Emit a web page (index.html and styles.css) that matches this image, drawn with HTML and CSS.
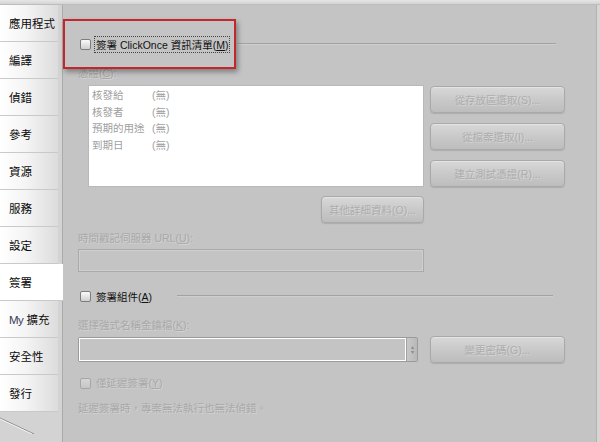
FILE: index.html
```html
<!DOCTYPE html>
<html lang="zh-Hant">
<head>
    <meta charset="UTF-8">
    <meta name="viewport" content="width=device-width, initial-scale=1.0">
    <title>簽署</title>
    <link rel="stylesheet" href="styles.css">
</head>
<body>
    <div class="topbar"></div>
    <div class="window">
        <nav class="tabs">
            <div class="tab">應用程式</div>
            <div class="tab">編譯</div>
            <div class="tab">偵錯</div>
            <div class="tab">參考</div>
            <div class="tab">資源</div>
            <div class="tab">服務</div>
            <div class="tab">設定</div>
            <div class="tab active">簽署</div>
            <div class="tab"><span><span class="my">My</span> 擴充</span></div>
            <div class="tab">安全性</div>
            <div class="tab">發行</div>
            <svg class="tab-tail" width="62" height="22" viewBox="0 0 62 22">
                <path d="M0 6 L34 22" stroke="#8a8a8a" stroke-width="1" fill="none"/>
                <path d="M0 7 L32 22" stroke="#f2f2f2" stroke-width="1" fill="none"/>
            </svg>
        </nav>

        <main class="panel">
            <!-- 簽署 ClickOnce 資訊清單 -->
            <div class="section-head head-manifest">
                <span class="check"></span>
                <span class="head-label focus">簽署 ClickOnce 資訊清單(<u>M</u>)</span>
                <span class="rule rule-manifest"></span>
                <div class="callout"></div>
            </div>

            <div class="field-label cert-label">憑證(<u>C</u>):</div>
            <div class="cert-row">
                <div class="listbox">
                    <div class="cert-line"><span class="cert-key">核發給</span><span>(無)</span></div>
                    <div class="cert-line"><span class="cert-key">核發者</span><span>(無)</span></div>
                    <div class="cert-line"><span class="cert-key">預期的用途</span><span>(無)</span></div>
                    <div class="cert-line"><span class="cert-key">到期日</span><span>(無)</span></div>
                </div>
                <div class="cert-buttons">
                    <button class="btn">從存放區選取(S)...</button>
                    <button class="btn">從檔案選取(I)...</button>
                    <button class="btn">建立測試憑證(R)...</button>
                </div>
            </div>
            <button class="btn btn-more">其他詳細資料(O)...</button>

            <div class="field-label url-label">時間戳記伺服器 URL(<u>U</u>):</div>
            <div class="textbox"></div>

            <!-- 簽署組件 -->
            <div class="section-head head-assembly">
                <span class="check"></span>
                <span class="head-label">簽署組件(<u>A</u>)</span>
                <span class="rule rule-assembly"></span>
            </div>

            <div class="field-label key-label">選擇強式名稱金鑰檔(<u>K</u>):</div>
            <div class="key-row">
                <div class="combo">
                    <div class="combo-field"></div>
                    <div class="combo-spin"><span>▴</span><span>▾</span></div>
                </div>
                <button class="btn btn-password">變更密碼(G)...</button>
            </div>

            <div class="delay-row">
                <span class="check disabled"></span>
                <span class="field-label">僅延遲簽署(<u>Y</u>)</span>
            </div>
            <div class="field-label note">延遲簽署時，專案無法執行也無法偵錯。</div>
        </main>
        <div class="edge"></div>
    </div>
</body>
</html>
```

FILE: styles.css
```css
body {
    margin: 0;
    width: 600px;
    height: 442px;
    overflow: hidden;
    background-color: #c4c4c4;
    font-family: "Liberation Sans", "Noto Sans CJK TC", sans-serif;
    font-size: 10.5px;
    color: #111;
}
.topbar {
    height: 4px;
    background: linear-gradient(#e6e6e6, #d4d4d4);
    border-bottom: 1px solid #bdbdbd;
}
.window {
    display: flex;
    height: 437px;
}

/* 左側索引標籤 */
.tabs {
    width: 62px;
    flex-shrink: 0;
    background-color: #d3d3d3;
    border-right: 1px solid #aaaaaa;
    display: flex;
    flex-direction: column;
    position: relative;
}
.tab {
    width: 58px;
    height: 37px;
    border-bottom: 1px solid #c9c9c9;
    background: linear-gradient(90deg, #ffffff 0%, #f4f4f4 45%, #dcdcdc 100%);
    display: flex;
    align-items: center;
    padding-left: 9px;
    box-sizing: border-box;
    font-size: 11.5px;
    color: #0a0a0a;
    white-space: nowrap;
}
.tab.active {
    width: 63px;
    background: #ffffff;
    margin-right: -1px;
    z-index: 1;
}
.my {
    color: #3a3a5a;
    letter-spacing: -0.5px;
}
.tab-tail {
    display: block;
}

/* 右側內容 */
.panel {
    flex: 1;
    padding-left: 15px;
    position: relative;
}
.edge {
    width: 3px;
    background-color: #d6d6d6;
    border-left: 1px solid #b2b2b2;
}
.section-head {
    display: flex;
    align-items: center;
    height: 16px;
    position: relative;
}
.head-manifest {
    margin-top: 31px;
}
.head-assembly {
    margin-top: 16px;
}
.check {
    width: 9px;
    height: 9px;
    margin-left: 2px;
    margin-right: 3px;
    border: 1px solid #7d7d7d;
    border-radius: 2px;
    background: linear-gradient(#fafafa, #cfcfcf);
    flex-shrink: 0;
}
.check.disabled {
    border-color: #a6a6a6;
    background: linear-gradient(#d6d6d6, #c6c6c6);
}
.head-label {
    padding: 0 1px;
    border: 1px dotted transparent;
    white-space: nowrap;
}
.head-label.focus {
    border-color: #444;
}
.rule {
    height: 1px;
    background-color: #a2a2a2;
    border-bottom: 1px solid #cfcfcf;
}
.rule-manifest {
    margin-left: 8px;
    width: 318px;
}
.rule-assembly {
    margin-left: 23px;
    width: 376px;
}
.callout {
    position: absolute;
    left: -15px;
    top: -17px;
    width: 169px;
    height: 46px;
    border: 2px solid #c1272d;
    box-shadow: 2px 3px 5px rgba(0, 0, 0, 0.35);
}

.field-label {
    color: #a9a9a9;
    text-shadow: 1px 1px 0 rgba(255, 255, 255, 0.25);
    height: 14px;
    line-height: 14px;
    white-space: nowrap;
}
.cert-label {
    margin-top: 14px;
}
.cert-row {
    display: flex;
    margin-top: 5px;
}
.listbox {
    width: 336px;
    height: 102px;
    margin-left: 10px;
    background-color: #ffffff;
    border: 1px solid #b8b8b8;
    box-sizing: border-box;
    padding: 1px 0 0 3px;
    color: #a0a0a0;
}
.cert-line {
    display: flex;
    height: 16.5px;
    line-height: 16.5px;
}
.cert-key {
    width: 60px;
}
.cert-buttons {
    display: flex;
    flex-direction: column;
    gap: 10px;
    margin-left: 6px;
    padding-top: 1px;
}
.btn {
    width: 135px;
    height: 27px;
    border: 1px solid #a9a9a9;
    border-radius: 4px;
    background: linear-gradient(#d8d8d8, #c9c9c9 50%, #bdbdbd);
    box-shadow: inset 0 1px 0 #e4e4e4, 0 1px 1px rgba(0, 0, 0, 0.12);
    font-family: inherit;
    font-size: 10.5px;
    color: #adadad;
    text-shadow: 1px 1px 0 rgba(255, 255, 255, 0.3);
    padding: 0;
}
.btn-more {
    display: block;
    width: 103px;
    margin: 9px 0 0 243px;
}
.url-label {
    margin-top: 8px;
}
.textbox {
    width: 346px;
    height: 23px;
    margin-top: 4px;
    border: 1px solid #aaaaaa;
    box-sizing: border-box;
    box-shadow: inset 0 0 0 1px #cfcfcf;
}
.key-label {
    margin-top: 14px;
}
.key-row {
    display: flex;
    align-items: center;
    margin-top: 4px;
    height: 27px;
}
.combo {
    display: flex;
    width: 340px;
    height: 25px;
    border: 1px solid #9a9a9a;
    border-radius: 2px;
    box-sizing: border-box;
}
.combo-field {
    flex: 1;
    border: 1px solid #ffffff;
}
.combo-spin {
    width: 10px;
    display: flex;
    flex-direction: column;
    justify-content: center;
    align-items: center;
    background: linear-gradient(90deg, #c8c8c8, #b8b8b8);
    border-left: 1px solid #a0a0a0;
    font-size: 6px;
    line-height: 5px;
    color: #8a8a8a;
}
.btn-password {
    margin-left: 12px;
}
.delay-row {
    display: flex;
    align-items: center;
    margin-top: 13px;
}
.delay-row .check {
    margin-right: 5px;
}
.note {
    margin-top: 11px;
}
```
